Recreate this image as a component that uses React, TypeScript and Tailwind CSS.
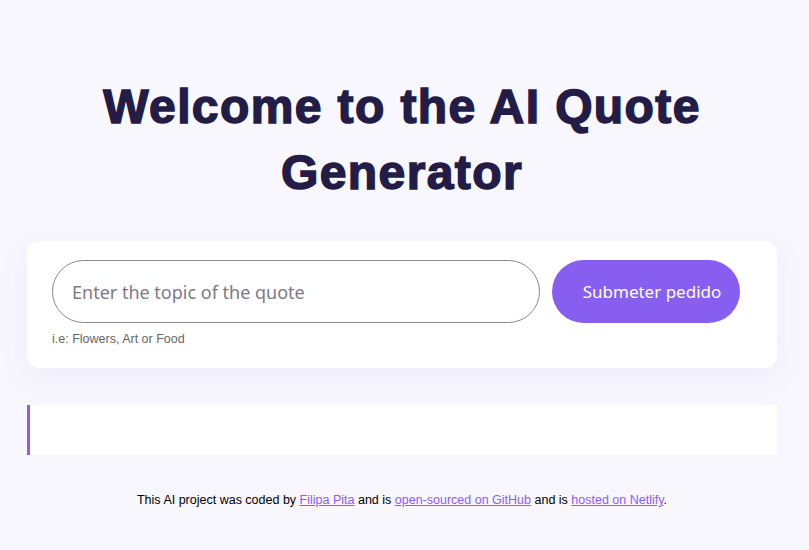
import React from "react";

const App: React.FC = () => {
  return (
    <div className="min-h-[550px] bg-[#f8f7fe] pt-[74px] font-['Liberation_Sans',Arial,sans-serif]">
      <div className="ml-[27px] w-[750px]">
        <h1 className="text-center text-[48px] leading-[66px] font-bold text-[#221c46] [-webkit-text-stroke:1.5px_#221c46] tracking-[1.4px]">
          Welcome to the AI Quote
          <br />
          Generator
        </h1>

        <form
          className="mt-[35px] rounded-xl bg-white pl-[25px] pr-[37px] pt-[19px] pb-[22px] shadow-[0_10px_30px_rgba(120,100,220,0.08)]"
          onSubmit={(e) => e.preventDefault()}
        >
          <div className="flex items-center gap-[12px]">
            <input
              type="text"
              placeholder="Enter the topic of the quote"
              className="h-[63px] flex-1 rounded-full border border-[#8a8a8a] bg-white px-[19px] text-[18px] text-[#333] outline-none placeholder:text-[#7d7a88] font-['Noto_Sans',sans-serif]"
            />
            <button
              type="submit"
              className="h-[63px] w-[188px] rounded-full bg-[#875ef0] pl-[12px] text-[17px] text-white font-['Noto_Sans',sans-serif]"
            >
              Submeter pedido
            </button>
          </div>
          <p className="mt-[9px] text-[12.5px] leading-[14px] text-[#666]">
            i.e: Flowers, Art or Food
          </p>
        </form>

        <div className="mt-[37px] h-[50px] border-l-[3px] border-[#8b5cf6] bg-white" />

        <footer className="mt-[38px] text-center text-[12.5px] leading-[14px] text-black">
          This AI project was coded by{" "}
          <a href="#" className="text-[#8b5cf6] underline">
            Filipa Pita
          </a>{" "}
          and is{" "}
          <a href="#" className="text-[#8b5cf6] underline">
            open-sourced on GitHub
          </a>{" "}
          and is{" "}
          <a href="#" className="text-[#8b5cf6] underline">
            hosted on Netlify
          </a>
          .
        </footer>
      </div>
    </div>
  );
};

export default App;
